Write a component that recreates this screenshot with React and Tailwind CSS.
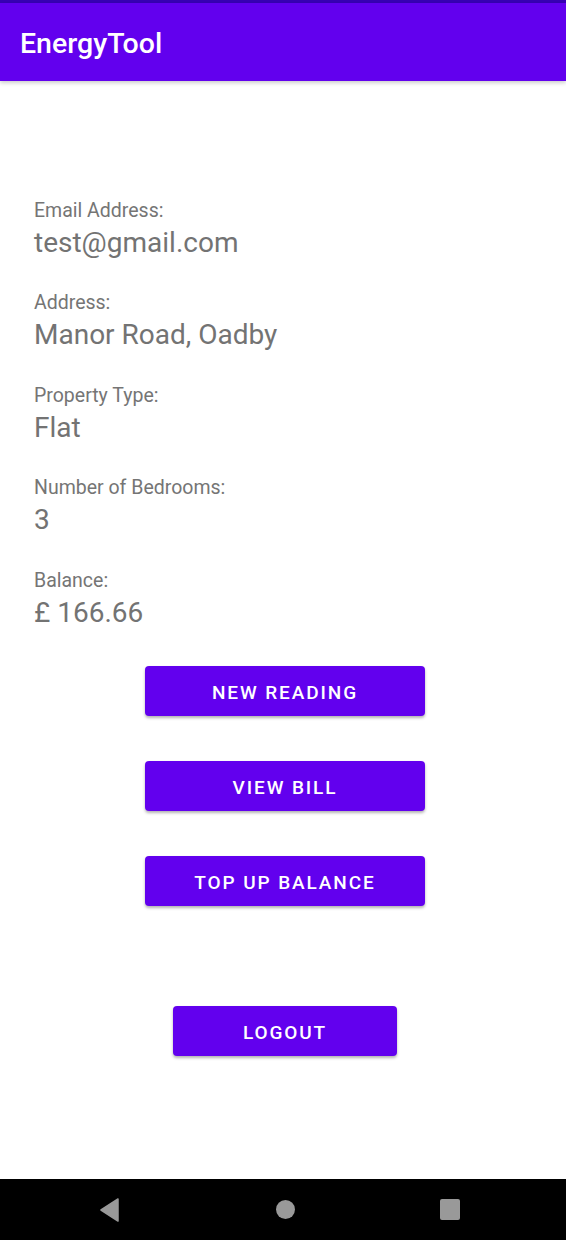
import React from 'react';

const fields = [
    { label: 'Email Address:', value: 'test@gmail.com' },
    { label: 'Address:', value: 'Manor Road, Oadby' },
    { label: 'Property Type:', value: 'Flat' },
    { label: 'Number of Bedrooms:', value: '3' },
    { label: 'Balance:', value: '£ 166.66' },
];

const Btn = ({ children, className = '' }) => (
    <button className={`h-[50px] pt-[5px] rounded-[4px] bg-[#6200ee] text-white text-[19px] font-medium tracking-[0.1em] uppercase shadow-[0_2px_3px_rgba(0,0,0,0.3)] ${className}`}>
        {children}
    </button>
);

const App = () => {
    return (
        <div className="w-[566px] h-[1240px] flex flex-col bg-white overflow-hidden" style={{ fontFamily: 'Roboto, "Noto Sans", sans-serif' }}>
            {/* Status + app bar */}
            <div className="h-[3px] bg-[#3700b3]" />
            <div className="h-[78px] bg-[#6200ee] flex items-center px-5 pt-[4px] shadow-[0_2px_4px_rgba(0,0,0,0.2)] z-10">
                <h1 className="text-white text-[28.5px] font-medium leading-none">EnergyTool</h1>
            </div>

            {/* Content */}
            <div className="flex-1 flex flex-col pt-[119px]">
                <div className="flex flex-col gap-[33.4px] pl-[34px]">
                    {fields.map((f) => (
                        <div key={f.label} className="flex flex-col gap-[5px]">
                            <p className="text-[19.5px] leading-[22px] text-[#757575]">{f.label}</p>
                            <p className="text-[28px] leading-[32px] text-[#737373]">{f.value}</p>
                        </div>
                    ))}
                </div>

                <div className="flex flex-col items-center pl-[4px] mt-[37px]">
                    <div className="flex flex-col gap-[45px]">
                        <Btn className="w-[280px]">New Reading</Btn>
                        <Btn className="w-[280px]">View Bill</Btn>
                        <Btn className="w-[280px]">Top Up Balance</Btn>
                    </div>
                    <Btn className="w-[224px] mt-[100px]">Logout</Btn>
                </div>
            </div>

            {/* Nav bar */}
            <div className="h-[61px] bg-black flex items-center pl-[100px]">
                <svg width="19" height="24" viewBox="0 0 19 24">
                    <path d="M18 1 L1 12 L18 23 Z" fill="#999" stroke="#999" strokeWidth="1.5" strokeLinejoin="round" />
                </svg>
                <div className="w-[19px] h-[19px] rounded-full bg-[#999] ml-[157px]" />
                <div className="w-[20px] h-[21px] rounded-[2px] bg-[#999] ml-[145px]" />
            </div>
        </div>
    );
};

export default App;
